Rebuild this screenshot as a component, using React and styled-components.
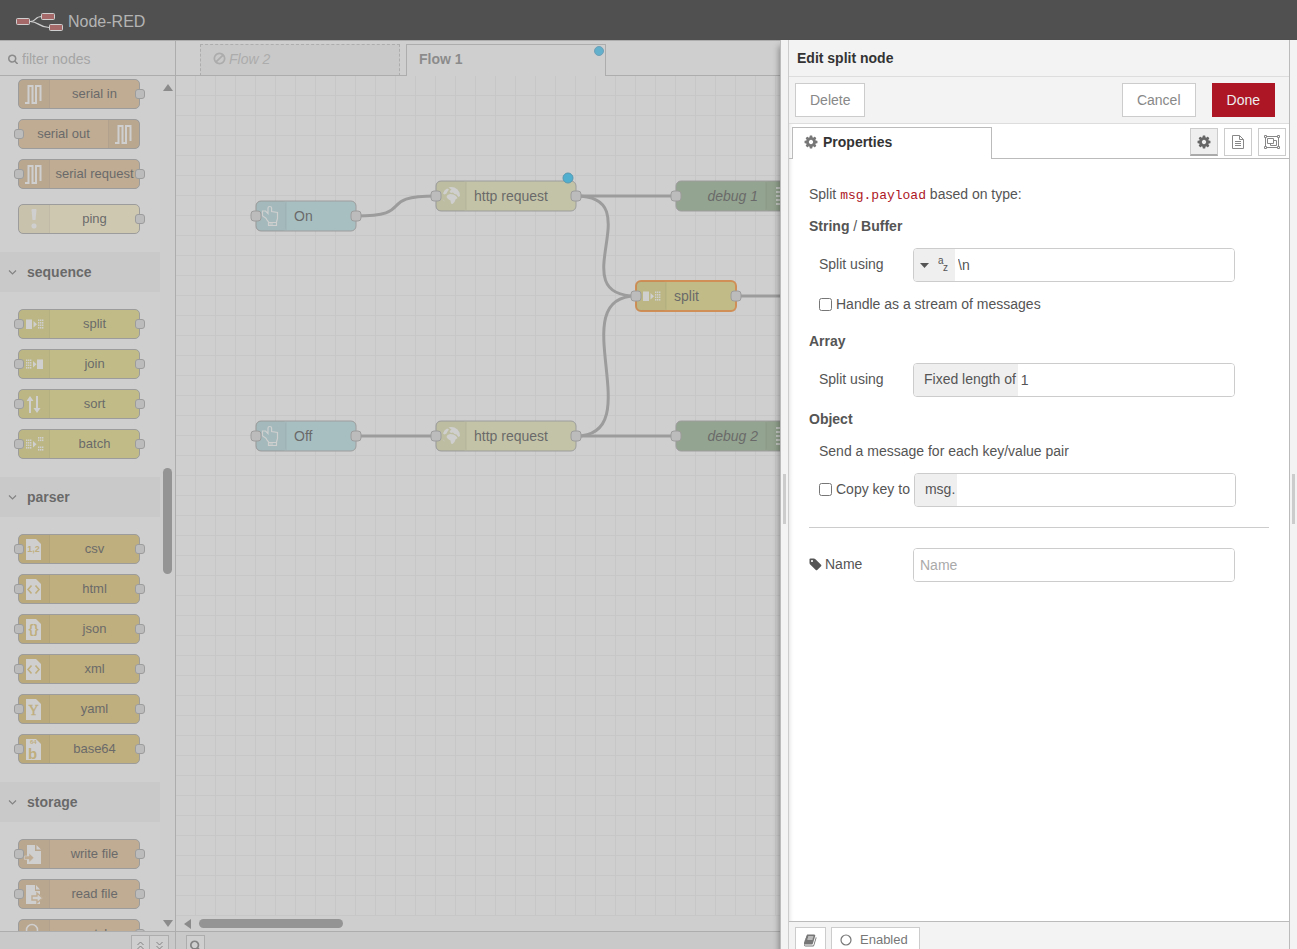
import { useState } from 'react';
import { createGlobalStyle, styled } from 'styled-components';

const GlobalStyle = createGlobalStyle`
  *, *::before, *::after {
    box-sizing: border-box;
  }

  body {
    margin: 0;
    color: #555;
    background: #f3f3f3;
  }

  body, button, input {
    font-family: 'Liberation Sans', Arial, sans-serif;
    font-size: 14px;
    line-height: 20px;
  }

  p, h2, h3 {
    margin: 0;
    font-size: 14px;
  }

  svg {
    display: block;
    flex-shrink: 0;
  }
`;

const Page = styled.div`
  position: relative;
  display: flex;
  flex-direction: column;
  height: 100vh;
  overflow: hidden;
`;

const Header = styled.header`
  display: flex;
  align-items: center;
  gap: 4px;
  height: 40px;
  padding: 4px 15px 0;
  flex-shrink: 0;
  background: #000;
  color: #c7c7c7;
  font-size: 16px;
`;

const Main = styled.main`
  display: flex;
  flex: 1;
  min-height: 0;
`;

// Dims everything behind the edit tray
const Shade = styled.div`
  position: absolute;
  inset: 0;
  background: rgba(160, 160, 160, 0.5);
`;

/* Palette */

const Palette = styled.aside`
  display: flex;
  flex-direction: column;
  width: 176px;
  flex-shrink: 0;
  border-top: 1px solid #bbb;
  border-right: 1px solid #bbb;
  background: #fff;
`;

const SearchBar = styled.label`
  display: flex;
  align-items: center;
  gap: 4px;
  height: 35px;
  padding: 1px 8px 0;
  flex-shrink: 0;
  border-bottom: 1px solid #bbb;
  color: #777;
`;

const SearchInput = styled.input`
  flex: 1;
  min-width: 0;
  padding: 0;
  border: none;
  outline: none;
  background: transparent;

  &::placeholder {
    color: #aaa;
  }
`;

const PaletteScroll = styled.div`
  display: flex;
  flex: 1;
  min-height: 0;
`;

const PaletteList = styled.div`
  flex: 1;
  overflow: hidden;
`;

const CategoryButton = styled.button`
  display: flex;
  align-items: center;
  gap: 10px;
  width: 100%;
  height: 40px;
  padding: 0 8px;
  border: none;
  background: #f3f3f3;
  color: #333;
  font-weight: bold;
`;

const NodeStack = styled.div`
  display: flex;
  flex-direction: column;
  gap: 10px;
  padding: ${(props) => (props.$top ? '3px' : '17px')} 20px 18px 18px;
`;

const PaletteNodeBox = styled.div`
  position: relative;
  display: flex;
  flex-direction: ${(props) => (props.$flip ? 'row-reverse' : 'row')};
  height: 30px;
  margin-top: ${(props) => (props.$spaced ? '5px' : '0')};
  border: 1px solid #999;
  border-radius: 5px;
  background: ${(props) => props.$color};
  color: #333;
`;

const NodeIconCell = styled.span`
  width: 31px;
  background: rgba(0, 0, 0, 0.05);
  border: 0 solid rgba(0, 0, 0, 0.06);
  border-width: ${(props) => (props.$flip ? '0 0 0 1px' : '0 1px 0 0')};

  svg {
    margin-top: -1px;
  }
`;

const NodeLabel = styled.span`
  flex: 1;
  font-size: 13px;
  line-height: 28px;
  text-align: center;
  white-space: nowrap;
`;

const Port = styled.span`
  position: absolute;
  top: 9px;
  ${(props) => (props.$side === 'left' ? 'left: -5px;' : 'right: -6px;')}
  width: 10px;
  height: 10px;
  border: 1px solid #999;
  border-radius: 3px;
  background: #d9d9d9;
`;

const VerticalBar = styled.div`
  display: flex;
  flex-direction: column;
  align-items: center;
  width: 15px;
  padding: 8px 0 4px;
  background: #fcfcfc;
  color: #777;
`;

const HorizontalBar = styled.div`
  display: flex;
  align-items: center;
  gap: 6px;
  height: 15px;
  padding: 0 7px;
  background: #fdfdfd;
  color: #777;
`;

const Track = styled.div`
  flex: 1;
  display: flex;
  flex-direction: ${(props) => (props.$vertical ? 'column' : 'row')};
`;

const Thumb = styled.div`
  width: ${(props) => (props.$vertical ? '9px' : '144px')};
  height: ${(props) => (props.$vertical ? '106px' : '9px')};
  border-radius: 5px;
  background: #888;
`;

const Footer = styled.footer`
  display: flex;
  justify-content: ${(props) => (props.$end ? 'flex-end' : 'flex-start')};
  height: 18px;
  padding: 3px ${(props) => (props.$end ? '6px' : '10px')} 0;
  flex-shrink: 0;
  overflow: hidden;
  border-top: 1px solid #bbb;
  background: #f3f3f3;
`;

const FooterButton = styled.button`
  display: flex;
  align-items: center;
  justify-content: center;
  width: 19px;
  height: 20px;
  padding: 0;
  border: 1px solid #bbb;
  background: #fff;
  color: #666;

  & + & {
    border-left: none;
  }
`;

/* Workspace */

const Workspace = styled.section`
  display: flex;
  flex-direction: column;
  flex: 1;
  min-width: 0;
  border-top: 1px solid #bbb;
  background: #fff;
`;

const FlowTabs = styled.div`
  display: flex;
  align-items: flex-end;
  gap: 6px;
  height: 35px;
  padding-left: 24px;
  flex-shrink: 0;
  box-shadow: inset 0 -1px #bbb;
`;

const FlowTab = styled.button`
  position: relative;
  display: flex;
  align-items: center;
  gap: 3px;
  width: 200px;
  height: 32px;
  padding: 0 12px 3px;
  border: 1px ${(props) => (props.$disabled ? 'dashed' : 'solid')} #bbb;
  border-bottom: ${(props) => (props.$disabled ? '1px solid #bbb' : 'none')};
  background: ${(props) => (props.$disabled ? '#f3f3f3' : '#fff')};
  color: ${(props) => (props.$disabled ? '#b8b8b8' : '#777')};
  font-style: ${(props) => (props.$disabled ? 'italic' : 'normal')};
  font-weight: ${(props) => (props.$disabled ? 'normal' : 'bold')};
`;

const ChangedDot = styled.span`
  position: absolute;
  top: 1px;
  right: 1px;
  width: 10px;
  height: 10px;
  border: 1px solid #3ba0cc;
  border-radius: 50%;
  background: #26c0f8;
`;

const Canvas = styled.div`
  flex: 1;
  min-height: 0;
  overflow: hidden;
  background-color: #fff;
  background-image:
    linear-gradient(to right, transparent 19px, #eee 19px),
    linear-gradient(to bottom, transparent 19px, #eee 19px);
  background-size: 20px 20px;

  text {
    fill: #333;
    font-size: 14px;
  }
`;

/* Edit tray */

const Tray = styled.section`
  position: relative;
  z-index: 1;
  display: flex;
  width: 517px;
  flex-shrink: 0;
  border-left: 1px solid #bbb;
  background: #f3f3f3;
  box-shadow: -1px 6px 6px rgba(0, 0, 0, 0.35);
`;

const Separator = styled.div`
  display: flex;
  align-items: center;
  justify-content: center;
  width: 7px;
  padding-top: 8px;

  &::before {
    content: '';
    width: 3px;
    height: 50px;
    background: #ccc;
  }
`;

const TrayPanel = styled.div`
  display: flex;
  flex-direction: column;
  flex: 1;
  min-width: 0;
  border: 0 solid #ccc;
  border-width: 0 1px;
  border-right-color: #bbb;
  background: #fff;
  box-shadow: inset 4px 0 4px -3px rgba(0, 0, 0, 0.12);
`;

const TrayTitle = styled.h2`
  height: 37px;
  padding: 8px;
  border-bottom: 1px solid #ddd;
  background: #f3f3f3;
  color: #333;
`;

const TrayToolbar = styled.div`
  display: flex;
  gap: 16px;
  height: 47px;
  padding: 6px 14px 6px 6px;
  border-bottom: 1px solid #ddd;
  background: #f3f3f3;
`;

const Button = styled.button`
  height: 34px;
  padding: 0 14px;
  margin-right: ${(props) => (props.$first ? 'auto' : '0')};
  border: 1px solid ${(props) => (props.$primary ? '#ad1625' : '#ccc')};
  background: ${(props) => (props.$primary ? '#ad1625' : '#fff')};
  color: ${(props) => (props.$primary ? '#eee' : '#888')};
`;

const EditorTabs = styled.div`
  display: flex;
  align-items: flex-end;
  justify-content: space-between;
  height: 35px;
  padding: 0 3px;
  box-shadow: inset 0 -1px #bbb;
`;

const EditorTab = styled.button`
  display: flex;
  align-items: center;
  gap: 5px;
  width: 200px;
  height: 32px;
  padding: 0 11px 3px;
  border: 1px solid #bbb;
  border-bottom: none;
  background: #fff;
  color: #333;
  font-weight: bold;

  svg {
    color: #777;
  }
`;

const TabButtons = styled.div`
  display: flex;
  gap: 6px;
  padding-bottom: 3px;
`;

const TabButton = styled.button`
  display: flex;
  align-items: center;
  justify-content: center;
  width: 28px;
  height: 28px;
  padding: 0;
  border: 1px solid #ccc;
  border-bottom: ${(props) => (props.$active ? '2px solid #aaa' : '1px solid #ccc')};
  background: ${(props) => (props.$active ? '#efefef' : '#fff')};
  color: ${(props) => (props.$active ? '#666' : '#888')};
`;

const Form = styled.form`
  display: flex;
  flex-direction: column;
  gap: 12px;
  flex: 1;
  min-height: 0;
  padding: 25px 20px;
  overflow: hidden;
`;

const Code = styled.code`
  color: #ad1625;
  font-family: 'Liberation Mono', monospace;
  font-size: 13px;
  line-height: 1;
`;

const Heading = styled.h3`
  margin-top: ${(props) => (props.$spaced ? '5px' : '0')};

  span {
    font-weight: normal;
  }
`;

const Row = styled.div`
  display: flex;
  align-items: center;
`;

const Note = styled.p`
  padding-left: 10px;
`;

const RowLabel = styled.label`
  display: flex;
  align-items: center;
  gap: 3px;
  width: 104px;
  padding-left: ${(props) => (props.$flush ? '0' : '10px')};
  padding-bottom: 2px;
`;

const CheckLabel = styled.label`
  display: flex;
  align-items: center;
  gap: 4px;
  margin-right: 4px;
  padding-left: 10px;
  padding-bottom: ${(props) => (props.$beside ? '2px' : '0')};
  white-space: nowrap;
`;

const Checkbox = styled.input`
  width: 13px;
  height: 13px;
  margin: 0;
`;

const Field = styled.div`
  display: flex;
  width: 70%;
  height: 34px;
  overflow: hidden;
  border: 1px solid #ccc;
  border-radius: 4px;
  background: #fff;
`;

const FieldPrefix = styled.label`
  padding: 5px 2px 0 10px;
  background: #efefef;
  white-space: nowrap;
`;

const TypeButton = styled.button`
  display: flex;
  align-items: center;
  gap: 9px;
  width: 41px;
  padding: 0 6px;
  border: none;
  background: #efefef;
  color: #555;
`;

const FieldInput = styled.input`
  flex: 1;
  min-width: 0;
  padding: 0 ${(props) => (props.$plain ? '6px' : '3px')};
  border: none;
  outline: none;
  color: #555;

  &::placeholder {
    color: #aaa;
  }
`;

const Divider = styled.hr`
  width: 100%;
  margin: 8px 0;
  border: none;
  border-top: 1px solid #ccc;
`;

const TrayFooter = styled.footer`
  display: flex;
  gap: 5px;
  height: 28px;
  padding: 5px 6px 0;
  flex-shrink: 0;
  overflow: hidden;
  border-top: 1px solid #bbb;
  background: #f3f3f3;
`;

const TrayFooterButton = styled.button`
  display: flex;
  align-items: center;
  gap: 8px;
  height: 26px;
  padding: 0 ${(props) => (props.$icon ? '8px' : '11px 0 8px')};
  border: 1px solid #ccc;
  background: #fff;
  color: #777;
  font-size: 13px;
`;

/* Icons */

const GLYPHS = {
  cog: 'M1152 896q0-106-75-181t-181-75-181 75-75 181 75 181 181 75 181-75 75-181zm512-109v222q0 12-8 23t-20 13l-185 28q-19 54-39 91 35 50 107 138 10 12 10 25t-9 23q-27 37-99 108t-94 71q-12 0-26-9l-138-108q-44 23-91 38-16 136-29 186-7 28-36 28h-222q-14 0-24.5-8.5t-11.5-21.5l-28-184q-49-16-90-37l-141 107q-10 9-25 9-14 0-25-11-126-114-165-168-7-10-7-23 0-12 8-23 15-21 51-66.5t54-70.5q-27-50-41-99l-183-27q-13-2-21-12.5t-8-23.5v-222q0-12 8-23t19-13l186-28q14-46 39-92-40-57-107-138-10-12-10-24 0-10 9-23 26-36 98.5-107.5t94.5-71.5q13 0 26 10l138 107q44-23 91-38 16-136 29-186 7-28 36-28h222q14 0 24.5 8.500t11.500 21.500l28 184q49 16 90 37l142-107q9-9 24-9 13 0 25 10 129 119 165 170 7 8 7 22 0 12-8 23-15 21-51 66.500t-54 70.500q26 50 41 98l183 28q13 2 21 12.500t8 23.500z',
  tag: 'M576 448q0-53-37.5-90.5t-90.5-37.5-90.5 37.5-37.5 90.5 37.5 90.5 90.5 37.5 90.5-37.5 37.5-90.5zm1067 576q0 53-37 90l-491 492q-39 37-91 37-53 0-90-37l-715-716q-38-37-64.5-101t-26.5-117v-416q0-52 38-90t90-38h416q53 0 117 26.5t102 64.5l715 714q37 39 37 91z',
  search: 'M1216 832q0-185-131.5-316.5t-316.5-131.5-316.5 131.5-131.5 316.5 131.5 316.5 316.5 131.5 316.5-131.5 131.5-316.5zm512 832q0 52-38 90t-90 38q-54 0-90-38l-343-342q-179 124-399 124-143 0-273.5-55.5t-225-150-150-225-55.5-273.5 55.5-273.5 150-225 225-150 273.5-55.5 273.5 55.5 225 150 150 225 55.5 273.5q0 220-124 399l343 343q37 37 37 90z',
  ban: 'M1440 893q0-161-87-295l-754 753q137 89 297 89 111 0 211.5-43.5t173.5-116.5 116-174.5 43-212.5zm-999 299l755-754q-135-91-300-91-148 0-273 73t-198 199-73 274q0 162 89 299zm1223-299q0 157-61 300t-163.5 246-245 164-298.5 61-298.5-61-245-164-163.5-246-61-300 61-299.5 163.5-245.5 245-164 298.5-61 298.5 61 245 164 163.5 245.5 61 299.5z',
  book: 'M1639 478q40 57 18 129l-275 906q-19 64-76.5 107.5t-122.5 43.5h-923q-77 0-148.5-53.5t-99.5-131.5q-24-67-2-127 0-4 3-27t4-37q1-8-3-21.5t-3-19.5q2-11 8-21t16.5-23.5 16.5-23.5q23-38 45-91.5t30-91.5q3-10 .5-30t-.5-28q3-11 17-28t17-23q21-36 42-92t25-90q1-9-2.5-32t.5-28q4-13 22-30.5t22-22.5q19-26 42.5-84.5t27.5-96.5q1-8-3-25.5t-2-26.5q2-8 9-18t18-23 17-21q8-12 16.5-30.5t15-35 16-36 19.5-32 26.5-23.5 36-11.5 47.5 5.5l-1 3q38-9 51-9h761q74 0 114 56t18 130l-274 906q-36 119-71.5 153.5t-128.5 34.5h-869q-27 0-38 15-11 16-1 43 24 70 144 70h923q29 0 56-15.5t35-41.5l300-987q7-22 5-57 38 15 59 43zm-1064 2q-4 13 2 22.5t20 9.5h608q13 0 25.5-9.5t16.5-22.5l21-64q4-13-2-22.5t-20-9.5h-608q-13 0-25.5 9.5t-16.5 22.5zm-83 256q-4 13 2 22.5t20 9.5h608q13 0 25.5-9.5t16.5-22.5l21-64q4-13-2-22.5t-20-9.5h-608q-13 0-25.5 9.5t-16.5 22.5z',
};

function Glyph({ name, size = 14 }) {
  return (
    <svg width={size} height={size} viewBox="64 64 1664 1664" fill="currentColor">
      <path d={GLYPHS[name]} />
    </svg>
  );
}

function Arrow({ direction }) {
  const paths = {
    up: 'M0 7L5 0L10 7Z',
    down: 'M0 3H10L5 10Z',
    left: 'M8 0V10L1 5Z',
  };
  return (
    <svg width="10" height="10" viewBox="0 0 10 10" fill="currentColor">
      <path d={paths[direction]} />
    </svg>
  );
}

function Chevron() {
  return (
    <svg width="9" height="10" fill="none" stroke="#666" strokeWidth="1.200">
      <path d="M1 3.500L4.500 7L8 3.500" />
    </svg>
  );
}

function DoubleChevron({ down }) {
  return (
    <svg width="9" height="9" fill="none" stroke="currentColor">
      <path d={down ? 'M1.500 1L4.500 4L7.500 1M1.500 5L4.500 8L7.500 5' : 'M1.500 4L4.500 1L7.500 4M1.500 8L4.500 5L7.500 8'} />
    </svg>
  );
}

function Logo() {
  return (
    <svg width="49" height="20" viewBox="0 0 49 20" fill="#a33" stroke="#fff">
      <path d="M15 9.500C22 9.500 19 4.500 27 4.500M15 9.500C24 9.500 24 15.500 34 15.500" fill="none" strokeWidth="1.200" />
      <rect x="1.500" y="6.500" width="13" height="6" rx="1" />
      <rect x="26.500" y="1.500" width="13" height="6" rx="1" />
      <rect x="34.500" y="12.500" width="13" height="6" rx="1" />
    </svg>
  );
}

// A grid of small squares used by split, join and batch
function Dots({ x, y, cols = 3, rows = 4 }) {
  const dots = [];
  for (let c = 0; c < cols; c++) {
    for (let r = 0; r < rows; r++) {
      dots.push(
        <rect key={`${c}-${r}`} x={x + c * 2} y={y + r * 2.5} width="1.400" height="1.600" />
      );
    }
  }
  return dots;
}

function FilePage({ children }) {
  return (
    <>
      <path d="M7 5H17L22 10V26H7Z" />
      {children}
    </>
  );
}

// Every node icon is drawn on a 30 x 30 cell
function NodeIcon({ name, tint }) {
  switch (name) {
    case 'serial':
      return <path d="M6 24H9.500V7H13.500V24H17V7H21.500V22" fill="none" stroke="#fff" strokeWidth="2" />;
    case 'alert':
      return (
        <>
          <path d="M12.500 6Q12.500 5 13.500 5H16.500Q17.500 5 17.500 6L16.500 16H13.500Z" />
          <rect x="12.500" y="19.500" width="5" height="5" rx="2" />
        </>
      );
    case 'split':
      return (
        <>
          <rect x="7" y="10.500" width="6" height="9.500" />
          <path d="M14.500 12L18 15.200L14.500 18.500Z" />
          <Dots x={19} y={10.5} />
        </>
      );
    case 'join':
      return (
        <>
          <Dots x={7} y={10.5} />
          <path d="M14 12L17.500 15.200L14 18.500Z" />
          <rect x="18" y="10.500" width="6" height="9.500" />
        </>
      );
    case 'batch':
      return (
        <>
          <Dots x={7} y={10.5} />
          <path d="M14 12L17.500 15.200L14 18.500Z" />
          <Dots x={19} y={8} rows={2} />
          <Dots x={19} y={17.5} rows={2} />
        </>
      );
    case 'sort':
      return (
        <path d="M10 24V12H7.500L11 7L14.500 12H12V24ZM17 7V19H14.500L18 24L21.500 19H19V7Z" />
      );
    case 'csv':
      return (
        <FilePage>
          <text x="14.500" y="18" textAnchor="middle" fontSize="9" fontWeight="bold" fill={tint}>1,2</text>
        </FilePage>
      );
    case 'markup':
      return (
        <FilePage>
          <path d="M12.500 11.500L9 15.500L12.500 19.500M16.500 11.500L20 15.500L16.500 19.500" fill="none" stroke={tint} strokeWidth="1.600" />
        </FilePage>
      );
    case 'json':
      return (
        <FilePage>
          <text x="14.500" y="19" textAnchor="middle" fontSize="13" fontWeight="bold" fill={tint}>{'{}'}</text>
        </FilePage>
      );
    case 'yaml':
      return (
        <FilePage>
          <text x="14.500" y="21" textAnchor="middle" fontSize="14" fontFamily="Liberation Serif, serif" fill={tint} stroke={tint} strokeWidth="0.400">Y</text>
        </FilePage>
      );
    case 'base64':
      return (
        <FilePage>
          <text x="9" y="25" fontSize="15" fontWeight="bold" fill={tint}>b</text>
          <text x="11" y="10" fontSize="6" fontWeight="bold" fill={tint}>64</text>
        </FilePage>
      );
    case 'fileIn':
      return (
        <>
          <path d="M8 6H16V12H22V25H8Z" />
          <path d="M17.500 6L22 10.500H17.500Z" />
          <path d="M5.500 17H10V14L15 18.700L10 23.500V20.500H5.500Z" fill={tint} stroke="#fff" strokeWidth="0.600" />
        </>
      );
    case 'fileOut':
      return (
        <>
          <path d="M7 6H16V12H21V25H7Z" />
          <path d="M17 6L21 10.500H17Z" />
          <path d="M13 17H18V14L23.500 19L18 24V21H13Z" fill="#fff" stroke={tint} strokeWidth="1.400" />
        </>
      );
    case 'watch':
      return (
        <g fill="none" stroke="#fff" strokeWidth="1.500">
          <circle cx="13" cy="11" r="5.500" />
          <path d="M17 15L23 22" strokeWidth="3" />
        </g>
      );
    case 'hand':
      return (
        <path
          d="M12.500 24.500V21L11 19C9.500 15.500 7.500 16.500 6.500 14.500V10H9.500L12 12.500V7Q12 5.500 13.800 5.500T15.600 7V10.500L21.500 11.500V17.500L20.500 21V24.500ZM12.500 21.500H20.500M13.500 23H17"
          fill="none"
          stroke="#fff"
          strokeWidth="1.200"
        />
      );
    case 'globe':
      return (
        <>
          <path d="M7 12.500L8.500 9.500L11 7.500L13 8.500L11.500 10.500L10.500 12.500L8.500 13.500Z" />
          <path d="M12.500 6.500L15 6L18.500 6.500L21.500 8.500L23.500 11.500L24 15L22.500 16L20.500 13.500L18.500 13L17 11.500L15 12L13.500 10.500L15.500 8.500Z" />
          <path d="M11.500 14L14 13L17.500 13.500L20 15L21.500 17L19.500 18.500L18.500 21L16.500 23L15 22.500L14.500 19.500L12 18L10.500 16Z" />
          <path d="M6.500 18L9 20.500L8 20Z" />
        </>
      );
    case 'debug':
      return (
        <path d="M10 7H24M10 11H24M10 15H24M10 19H24M10 23H24" fill="none" stroke="#fff" strokeWidth="1.600" />
      );
    default:
      return null;
  }
}

/* Data */

const BURLY = '#deb887';
const SEQUENCE = '#e2d96e';
const PARSER = '#debd5c';

const CATEGORIES = [
  {
    nodes: [
      { label: 'serial in', icon: 'serial', color: BURLY, output: true },
      { label: 'serial out', icon: 'serial', color: BURLY, input: true, flip: true },
      { label: 'serial request', icon: 'serial', color: BURLY, input: true, output: true },
      { label: 'ping', icon: 'alert', color: '#fdf0c2', output: true, spaced: true },
    ],
  },
  {
    name: 'sequence',
    nodes: [
      { label: 'split', icon: 'split', color: SEQUENCE, input: true, output: true },
      { label: 'join', icon: 'join', color: SEQUENCE, input: true, output: true },
      { label: 'sort', icon: 'sort', color: SEQUENCE, input: true, output: true },
      { label: 'batch', icon: 'batch', color: SEQUENCE, input: true, output: true },
    ],
  },
  {
    name: 'parser',
    nodes: [
      { label: 'csv', icon: 'csv', color: PARSER, input: true, output: true },
      { label: 'html', icon: 'markup', color: PARSER, input: true, output: true },
      { label: 'json', icon: 'json', color: PARSER, input: true, output: true },
      { label: 'xml', icon: 'markup', color: PARSER, input: true, output: true },
      { label: 'yaml', icon: 'yaml', color: PARSER, input: true, output: true },
      { label: 'base64', icon: 'base64', color: PARSER, input: true, output: true },
    ],
  },
  {
    name: 'storage',
    nodes: [
      { label: 'write file', icon: 'fileIn', color: BURLY, input: true, output: true },
      { label: 'read file', icon: 'fileOut', color: BURLY, input: true, output: true },
      { label: 'watch', icon: 'watch', color: BURLY, output: true },
    ],
  },
];

const FLOW_NODES = [
  { id: 'on', label: 'On', icon: 'hand', color: '#b0dfe3', x: 80, y: 125, w: 100 },
  { id: 'off', label: 'Off', icon: 'hand', color: '#b0dfe3', x: 80, y: 345, w: 100 },
  { id: 'http1', label: 'http request', icon: 'globe', color: '#e7e7ae', x: 260, y: 105, w: 140, changed: true },
  { id: 'http2', label: 'http request', icon: 'globe', color: '#e7e7ae', x: 260, y: 345, w: 140 },
  { id: 'debug1', label: 'debug 1', icon: 'debug', color: '#87a980', x: 500, y: 105, w: 120, flip: true },
  { id: 'debug2', label: 'debug 2', icon: 'debug', color: '#87a980', x: 500, y: 345, w: 120, flip: true },
  { id: 'split', label: 'split', icon: 'split', color: SEQUENCE, x: 460, y: 205, w: 100, selected: true },
];

const WIRES = [
  [180, 140, 260, 120],
  [180, 360, 260, 360],
  [400, 120, 500, 120],
  [400, 120, 460, 220],
  [400, 360, 500, 360],
  [400, 360, 460, 220],
  [560, 220, 700, 220],
];

function wirePath([x1, y1, x2, y2]) {
  const length = Math.hypot(x2 - x1, y2 - y1);
  const reach = 75 * Math.min(1, length / 100);
  return `M${x1} ${y1}C${x1 + reach} ${y1} ${x2 - reach} ${y2} ${x2} ${y2}`;
}

/* Components */

function PaletteNode({ node }) {
  return (
    <PaletteNodeBox $color={node.color} $flip={node.flip} $spaced={node.spaced}>
      <NodeIconCell $flip={node.flip}>
        <svg width="30" height="30" fill="#fff">
          <NodeIcon name={node.icon} tint={node.color} />
        </svg>
      </NodeIconCell>
      <NodeLabel>{node.label}</NodeLabel>
      {node.input && <Port $side="left" />}
      {node.output && <Port $side="right" />}
    </PaletteNodeBox>
  );
}

function FlowNode({ node }) {
  const iconX = node.flip ? node.w - 30 : 0;
  const lineX = node.flip ? node.w - 30 : 30;
  const ports = node.flip ? [0] : [0, node.w];

  return (
    <g transform={`translate(${node.x} ${node.y})`}>
      <rect
        width={node.w}
        height="30"
        rx="5"
        fill={node.color}
        stroke={node.selected ? '#ff7f0e' : '#999'}
        strokeWidth={node.selected ? 2 : 1}
      />
      <rect x={iconX} width="30" height="30" rx="4" fill="#000" fillOpacity="0.05" />
      <path d={`M${lineX} 1V29`} stroke="#000" strokeOpacity="0.12" />
      <g transform={`translate(${iconX} 0)`} fill="#fff">
        <NodeIcon name={node.icon} tint={node.color} />
      </g>
      <text
        x={node.flip ? node.w - 38 : 38}
        y="20"
        textAnchor={node.flip ? 'end' : 'start'}
        fontStyle={node.flip ? 'italic' : 'normal'}
      >
        {node.label}
      </text>
      {ports.map((x) => (
        <rect key={x} x={x - 5} y="10" width="10" height="10" rx="3" fill="#d9d9d9" stroke="#999" />
      ))}
      {node.changed && <circle cx={node.w - 8} cy="-3" r="5" fill="#00bcff" stroke="#1090c0" />}
    </g>
  );
}

function PaletteSidebar() {
  const [filter, setFilter] = useState('');

  return (
    <Palette>
      <SearchBar>
        <Glyph name="search" size={10} />
        <SearchInput
          aria-label="filter nodes"
          placeholder="filter nodes"
          value={filter}
          onChange={(event) => setFilter(event.target.value)}
        />
      </SearchBar>
      <PaletteScroll>
        <PaletteList>
          {CATEGORIES.map((category, index) => (
            <div key={index}>
              {category.name && (
                <CategoryButton>
                  <Chevron />
                  {category.name}
                </CategoryButton>
              )}
              <NodeStack $top={!category.name}>
                {category.nodes
                  .filter((node) => node.label.includes(filter))
                  .map((node) => (
                    <PaletteNode key={node.label} node={node} />
                  ))}
              </NodeStack>
            </div>
          ))}
        </PaletteList>
        <VerticalBar>
          <Arrow direction="up" />
          <Track $vertical>
            <Thumb $vertical style={{ marginTop: 374 }} />
          </Track>
          <Arrow direction="down" />
        </VerticalBar>
      </PaletteScroll>
      <Footer $end>
        <FooterButton aria-label="Collapse all">
          <DoubleChevron />
        </FooterButton>
        <FooterButton aria-label="Expand all">
          <DoubleChevron down />
        </FooterButton>
      </Footer>
    </Palette>
  );
}

function FlowWorkspace() {
  return (
    <Workspace>
      <FlowTabs>
        <FlowTab $disabled>
          <Glyph name="ban" size={13} />
          Flow 2
        </FlowTab>
        <FlowTab>
          Flow 1
          <ChangedDot />
        </FlowTab>
      </FlowTabs>
      <Canvas>
        <svg width="100%" height="100%">
          {WIRES.map((wire) => (
            <path key={wire.join()} d={wirePath(wire)} fill="none" stroke="#999" strokeWidth="3" />
          ))}
          {FLOW_NODES.map((node) => (
            <FlowNode key={node.id} node={node} />
          ))}
        </svg>
      </Canvas>
      <HorizontalBar>
        <Arrow direction="left" />
        <Thumb />
      </HorizontalBar>
      <Footer>
        <FooterButton aria-label="Search flows">
          <Glyph name="search" size={11} />
        </FooterButton>
      </Footer>
    </Workspace>
  );
}

function EditTray() {
  const [stream, setStream] = useState(false);
  const [copyKey, setCopyKey] = useState(false);

  return (
    <Tray>
      <Separator />
      <TrayPanel>
        <TrayTitle>Edit split node</TrayTitle>
        <TrayToolbar>
          <Button $first>Delete</Button>
          <Button>Cancel</Button>
          <Button $primary>Done</Button>
        </TrayToolbar>
        <EditorTabs>
          <EditorTab>
            <Glyph name="cog" />
            Properties
          </EditorTab>
          <TabButtons>
            <TabButton $active aria-label="Properties">
              <Glyph name="cog" />
            </TabButton>
            <TabButton aria-label="Description">
              <svg width="12" height="14" fill="none" stroke="currentColor">
                <path d="M0.500 0.500H7.500L11.500 4.500V13.500H0.500ZM7.500 0.500V4.500H11.500M3 6.500H9M3 8.500H9M3 10.500H9" />
              </svg>
            </TabButton>
            <TabButton aria-label="Appearance">
              <svg width="16" height="14" fill="none" stroke="currentColor">
                <path d="M3 1.500H13M3 12.500H13M1.500 3V11M14.500 3V11M0.500 0.500H2.500V2.500H0.500ZM13.500 0.500H15.500V2.500H13.500ZM0.500 11.500H2.500V13.500H0.500ZM13.500 11.500H15.500V13.500H13.500ZM3.500 3.500H9.500V8.500H3.500ZM9.500 5.500H12.500V10.500H6.500V8.500" />
              </svg>
            </TabButton>
          </TabButtons>
        </EditorTabs>
        <Form onSubmit={(event) => event.preventDefault()}>
          <p>
            Split <Code>msg.payload</Code> based on type:
          </p>
          <Heading>
            String <span>/</span> Buffer
          </Heading>
          <Row>
            <RowLabel htmlFor="split-string">Split using</RowLabel>
            <Field>
              <TypeButton type="button" aria-label="string">
                <svg width="9" height="5" fill="currentColor">
                  <path d="M0 0H9L4.500 5Z" />
                </svg>
                <svg width="12" height="18" fill="currentColor">
                  <text x="0" y="8" fontSize="10">a</text>
                  <text x="5" y="15" fontSize="10">z</text>
                </svg>
              </TypeButton>
              <FieldInput id="split-string" defaultValue="\n" />
            </Field>
          </Row>
          <Row>
            <CheckLabel>
              <Checkbox type="checkbox" checked={stream} onChange={() => setStream(!stream)} />
              Handle as a stream of messages
            </CheckLabel>
          </Row>
          <Heading $spaced>Array</Heading>
          <Row>
            <RowLabel htmlFor="split-array">Split using</RowLabel>
            <Field>
              <FieldPrefix htmlFor="split-array">Fixed length of</FieldPrefix>
              <FieldInput id="split-array" defaultValue="1" />
            </Field>
          </Row>
          <Heading>Object</Heading>
          <Note>Send a message for each key/value pair</Note>
          <Row>
            <CheckLabel $beside>
              <Checkbox type="checkbox" checked={copyKey} onChange={() => setCopyKey(!copyKey)} />
              Copy key to
            </CheckLabel>
            <Field>
              <FieldPrefix htmlFor="split-key">msg.</FieldPrefix>
              <FieldInput id="split-key" />
            </Field>
          </Row>
          <Divider />
          <Row>
            <RowLabel $flush htmlFor="node-name">
              <Glyph name="tag" size={13} />
              Name
            </RowLabel>
            <Field>
              <FieldInput $plain id="node-name" placeholder="Name" />
            </Field>
          </Row>
        </Form>
        <TrayFooter>
          <TrayFooterButton $icon aria-label="Help">
            <Glyph name="book" size={13} />
          </TrayFooterButton>
          <TrayFooterButton>
            <svg width="12" height="12" fill="none" stroke="currentColor" strokeWidth="1.200">
              <circle cx="6" cy="6" r="5" />
            </svg>
            Enabled
          </TrayFooterButton>
        </TrayFooter>
      </TrayPanel>
      <Separator />
    </Tray>
  );
}

export default function App() {
  return (
    <Page>
      <GlobalStyle />
      <Header>
        <Logo />
        Node-RED
      </Header>
      <Main>
        <PaletteSidebar />
        <FlowWorkspace />
        <EditTray />
      </Main>
      <Shade />
    </Page>
  );
}
